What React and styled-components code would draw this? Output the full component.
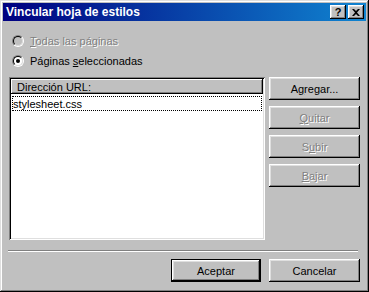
import React from 'react'
import styled, { createGlobalStyle } from 'styled-components'

const Global = createGlobalStyle`
  html, body { margin: 0; padding: 0; background: #c0c0c0; }
  body { font-family: "Liberation Sans", Arial, sans-serif; font-size: 11px; }
  * { box-sizing: border-box; }
`

const Window = styled.div`
  width: 369px;
  height: 292px;
  padding: 3px;
  background: #c0c0c0;
  display: flex;
  flex-direction: column;
  box-shadow: inset -1px -1px #000, inset 1px 1px #dfdfdf, inset -2px -2px #808080, inset 2px 2px #fff;
`

const TitleBar = styled.div`
  height: 18px;
  display: flex;
  align-items: center;
  padding: 0 2px 0 3px;
  background: linear-gradient(90deg, #000080, #1084d0);
  color: #fff;
  font-weight: bold;
  font-size: 12px;
`

const Title = styled.span`
  flex: 1;
  letter-spacing: 0;
`

const TitleButton = styled.button`
  width: 16px;
  height: 14px;
  padding: 0;
  margin-left: ${p => (p.$gap ? '2px' : '0')};
  border: none;
  background: #c0c0c0;
  color: #000;
  font-family: "Liberation Sans", Arial, sans-serif;
  font-weight: bold;
  font-size: 11px;
  line-height: 14px;
  display: flex;
  align-items: center;
  justify-content: center;
  box-shadow: inset -1px -1px #000, inset 1px 1px #fff, inset -2px -2px #808080, inset 2px 2px #dfdfdf;
`

const Body = styled.div`
  flex: 1;
  display: flex;
  flex-direction: column;
  padding: 10px 6px 0 6px;
`

const RadioRow = styled.label`
  height: 20px;
  display: flex;
  align-items: center;
  padding-left: 3px;
  color: ${p => (p.$disabled ? '#808080' : '#000')};
  text-shadow: ${p => (p.$disabled ? '1px 1px #fff' : 'none')};
`

const RadioOuter = styled.span`
  width: 12px;
  height: 12px;
  border-radius: 50%;
  border: 1px solid;
  border-color: #808080 #fff #fff #808080;
  margin-right: 6px;
  flex: none;
  display: flex;
`

const RadioInner = styled.span`
  width: 10px;
  height: 10px;
  border-radius: 50%;
  border: 1px solid;
  border-color: #000 #dfdfdf #dfdfdf #000;
  background: ${p => (p.$disabled ? '#c0c0c0' : '#fff')};
  display: flex;
  align-items: center;
  justify-content: center;
`

const Dot = styled.span`
  width: 4px;
  height: 4px;
  border-radius: 50%;
  background: #000;
`

const Main = styled.div`
  margin-top: 6px;
  display: flex;
  gap: 4px;
  height: 163px;
`

const ListBox = styled.div`
  flex: 1;
  background: #fff;
  padding: 2px;
  box-shadow: inset 1px 1px #808080, inset -1px -1px #fff, inset 2px 2px #000, inset -2px -2px #dfdfdf;
  display: flex;
  flex-direction: column;
`

const Header = styled.div`
  height: 15px;
  background: #c0c0c0;
  padding-left: 6px;
  display: flex;
  align-items: center;
  box-shadow: inset -1px -1px #000, inset 1px 1px #fff, inset -2px -2px #808080;
`

const Item = styled.div`
  margin: 2px 1px 0 1px;
  height: 15px;
  padding-left: 1px;
  display: flex;
  align-items: center;
  outline: 1px dotted #000;
  outline-offset: -1px;
`

const ButtonColumn = styled.div`
  width: 91px;
  display: flex;
  flex-direction: column;
  gap: 6px;
`

const Button = styled.button`
  height: 23px;
  width: ${p => p.$w || '91px'};
  padding: 0;
  border: none;
  background: #c0c0c0;
  font-family: "Liberation Sans", Arial, sans-serif;
  font-size: 11px;
  color: ${p => (p.disabled ? '#808080' : '#000')};
  text-shadow: ${p => (p.disabled ? '1px 1px #fff' : 'none')};
  box-shadow: ${p =>
    p.$default
      ? 'inset -1px -1px #000, inset 1px 1px #000, inset -2px -2px #000, inset 2px 2px #fff, inset -3px -3px #808080, inset 3px 3px #dfdfdf'
      : 'inset -1px -1px #000, inset 1px 1px #fff, inset -2px -2px #808080, inset 2px 2px #dfdfdf'};
`

const Separator = styled.div`
  margin: 10px 2px 0 -1px;
  height: 2px;
  border-top: 1px solid #808080;
  border-bottom: 1px solid #fff;
`

const Footer = styled.div`
  margin-top: 7px;
  display: flex;
  justify-content: flex-end;
  gap: 8px;
`

const U = styled.span`
  text-decoration: underline;
`

export default function App() {
  return (
    <>
      <Global />
      <Window>
        <TitleBar>
          <Title>Vincular hoja de estilos</Title>
          <TitleButton>?</TitleButton>
          <TitleButton $gap>
            <svg width="8" height="7" viewBox="0 0 8 7">
              <path d="M0 0h2l2 2 2-2h2L5 3.5 8 7H6L4 5 2 7H0l3-3.5z" fill="#000" />
            </svg>
          </TitleButton>
        </TitleBar>
        <Body>
          <RadioRow $disabled>
            <RadioOuter>
              <RadioInner $disabled />
            </RadioOuter>
            <span><U>T</U>odas las páginas</span>
          </RadioRow>
          <RadioRow>
            <RadioOuter>
              <RadioInner>
                <Dot />
              </RadioInner>
            </RadioOuter>
            <span>Páginas <U>s</U>eleccionadas</span>
          </RadioRow>
          <Main>
            <ListBox>
              <Header>Dirección URL:</Header>
              <Item>stylesheet.css</Item>
            </ListBox>
            <ButtonColumn>
              <Button>A<U>g</U>regar...</Button>
              <Button disabled><U>Q</U>uitar</Button>
              <Button disabled>S<U>u</U>bir</Button>
              <Button disabled><U>B</U>ajar</Button>
            </ButtonColumn>
          </Main>
          <Separator />
          <Footer>
            <Button $default $w="90px">Aceptar</Button>
            <Button $w="91px">Cancelar</Button>
          </Footer>
        </Body>
      </Window>
    </>
  )
}
